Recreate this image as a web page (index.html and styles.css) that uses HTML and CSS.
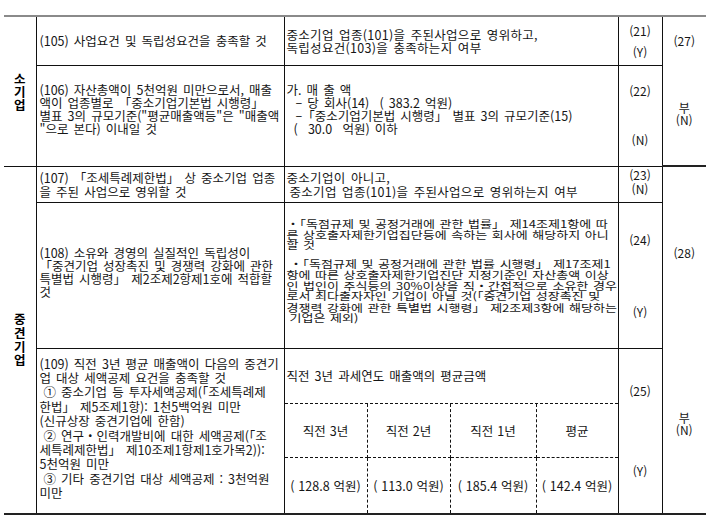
FILE: index.html
```html
<!DOCTYPE html>
<html lang="ko">
<head>
<meta charset="utf-8">
<title>중소기업·중견기업 요건 검토표</title>
<link rel="stylesheet" href="styles.css">
</head>
<body>
<table class="req">
  <colgroup>
    <col class="c-cat"><col class="c-cond"><col class="c-check"><col class="c-res"><col class="c-fin">
  </colgroup>
  <tr class="r1">
    <th rowspan="2" class="cat"><div class="vert">소<br>기<br>업</div></th>
    <td class="cond middle"><div class="txt">(105) 사업요건 및 독립성요건을 충족할 것</div></td>
    <td class="check middle"><div class="txt lh12 wide">중소기업 업종(101)을 주된사업으로 영위하고,<br>독립성요건(103)을 충족하는지 여부</div></td>
    <td class="res middle"><div class="pair g1"><span>(21)</span><span>(Y)</span></div></td>
    <td rowspan="2" class="fin"><div class="finbox f1"><span class="top">(27)</span><span class="bot">부<br>(N)</span></div></td>
  </tr>
  <tr class="r2">
    <td class="cond"><div class="txt lh13 pt18">(106) 자산총액이 5천억원 미만으로서, 매출<br>액이 업종별로 「중소기업기본법 시행령」<br>별표 3의 규모기준("평균매출액등"은 "매출액<br>"으로 본다) 이내일 것</div></td>
    <td class="check">
      <div class="txt lh13 pt18">
        <div>가. 매 출 액</div>
        <div class="ind1">– 당 회사(14) &nbsp;( 383.2 억원)</div>
        <div class="ind1">–「중소기업기본법 시행령」 별표 3의 규모기준(15)</div>
        <div class="ind2">( &nbsp;30.0 &nbsp;억원) 이하</div>
      </div>
    </td>
    <td class="res"><div class="pair g2"><span>(22)</span><span>(N)</span></div></td>
  </tr>
  <tr class="r3">
    <th rowspan="3" class="cat cat2"><div class="vert v2">중<br>견<br>기<br>업</div></th>
    <td class="cond"><div class="txt lh14 pt4">(107) 「조세특례제한법」 상 중소기업 업종<br>을 주된 사업으로 영위할 것</div></td>
    <td class="check">
      <div class="txt lh14 pt4 wide">
        <div>중소기업이 아니고,</div>
        <div class="ind3">중소기업 업종(101)을 주된사업으로 영위하는지 여부</div>
      </div>
    </td>
    <td class="res"><div class="pair g3"><span>(23)</span><span>(N)</span></div></td>
    <td rowspan="3" class="fin"><div class="finbox f2"><span class="top">(28)</span><span class="bot">부<br>(N)</span></div></td>
  </tr>
  <tr class="r4">
    <td class="cond"><div class="txt lh133 pt44">(108) 소유와 경영의 실질적인 독립성이<br>「중견기업 성장촉진 및 경쟁력 강화에 관한<br>특별법 시행령」 제2조제2항제1호에 적합할<br>것</div></td>
    <td class="check">
      <div class="txt dense">
        <p>・「독점규제 및 공정거래에 관한 법률」 제14조제1항에 따<br>른 상호출자제한기업집단등에 속하는 회사에 해당하지 아니<br>할 것</p>
        <p><span class="ind3">・「독점규제 및 공정거래에 관한 법률 시행령」 제17조제1</span><br>항에 따른 상호출자제한기업진단 지정기준인 자산총액 이상<br>인 법인이 주식등의 30%이상을 직・간접적으로 소유한 경우<br>로서 최다출자자인 기업이 아닐 것(「중견기업 성장촉진 및<br>경쟁력 강화에 관한 특별법 시행령」 제2조제3항에 해당하는<br><span class="ind3">기업은 제외)</span></p>
      </div>
    </td>
    <td class="res"><div class="pair g4"><span>(24)</span><span>(Y)</span></div></td>
  </tr>
  <tr class="r5">
    <td class="cond"><div class="txt lh144 pt9">(109) 직전 3년 평균 매출액이 다음의 중견기<br>업 대상 세액공제 요건을 충족할 것<br><span class="ind4">① 중소기업 등 투자세액공제(「조세특례제</span><br>한법」 제5조제1항): 1천5백억원 미만<br>(신규상장 중견기업에 한함)<br><span class="ind4">② 연구・인력개발비에 대한 세액공제(「조</span><br>세특례제한법」 제10조제1항제1호가목2)):<br>5천억원 미만<br><span class="ind4">③ 기타 중견기업 대상 세액공제 : 3천억원</span><br>미만</div></td>
    <td class="check nest">
      <div class="avg">
        <div class="avg-title">직전 3년 과세연도 매출액의 평균금액</div>
        <div class="avg-grid">
          <div class="avg-cell">직전 3년</div>
          <div class="avg-cell">직전 2년</div>
          <div class="avg-cell">직전 1년</div>
          <div class="avg-cell">평균</div>
          <div class="avg-cell">( 128.8 억원)</div>
          <div class="avg-cell">( 113.0 억원)</div>
          <div class="avg-cell">( 185.4 억원)</div>
          <div class="avg-cell">( 142.4 억원)</div>
        </div>
      </div>
    </td>
    <td class="res"><div class="pair g5"><span>(25)</span><span>(Y)</span></div></td>
  </tr>
</table>
</body>
</html>
```

FILE: styles.css
```css
html, body {
  margin: 0;
  padding: 0;
  background: #ffffff;
}

body {
  font-family: "Noto Sans CJK KR", "Liberation Sans", sans-serif;
  font-size: 12.5px;
  color: #161616;
}

.req {
  border-collapse: collapse;
  table-layout: fixed;
  width: 702px;
  margin: 15px 0 0 4px;
  word-spacing: 1.6px;
}

.c-cat { width: 32px; }
.c-cond { width: 248px; }
.c-check { width: 334px; }
.c-res { width: 44px; }
.c-fin { width: 44px; }

.req td,
.req th {
  border: 1px solid #111;
  padding: 0;
  vertical-align: top;
  white-space: nowrap;
  font-weight: normal;
  text-align: left;
  overflow: hidden;
}

.req tr.r1 > td,
.req tr.r1 > th {
  border-top: 2px solid #8a8a8a;
}

.req tr.r5 > td,
.req tr.r5 > th,
.req td.fin,
.req th.cat2 {
  border-bottom: 2px solid #222;
}

.req th.cat { border-left: none; }
.req td.fin { border-right: none; }

.r1 { height: 49px; }
.r2 { height: 101px; }
.r3 { height: 36px; }
.r4 { height: 146px; }
.r5 { height: 165px; }

.req td.middle { vertical-align: middle; }

/* category column */
.req th.cat {
  vertical-align: middle;
  text-align: center;
}
.vert {
  font-weight: bold;
  font-size: 12.5px;
  line-height: 13px;
  color: #000;
}
.vert.v2 { line-height: 13.7px; }

/* text blocks */
.txt { padding-left: 3px; }
.check .txt { padding-left: 2px; }
.wide { letter-spacing: 0.3px; }
.lh12 { line-height: 13px; }
.lh13 { line-height: 13px; }
.lh14 { line-height: 14px; }
.lh133 { line-height: 13.3px; }
.lh144 { line-height: 14.4px; }
.pt4 { padding-top: 4px; }
.pt9 { padding-top: 8px; }
.pt18 { padding-top: 17px; }
.pt44 { padding-top: 43px; }

.ind1 { padding-left: 9px; }
.ind2 { padding-left: 7px; }
.ind3 { padding-left: 3px; }
.ind4 { padding-left: 4px; }

/* dense, vertically compressed text */
.dense {
  height: 100px;
  margin-top: 15px;
  font-size: 13px;
  line-height: 13.5px;
  transform: scaleY(0.8);
  transform-origin: top left;
  word-spacing: 1px;
}
.dense p { margin: 0 0 10px 0; }

/* result column */
.pair {
  display: flex;
  flex-direction: column;
  align-items: center;
  line-height: 13px;
  font-size: 12px;
  word-spacing: 0;
}
.g1 { gap: 8px; }
.g2 { padding-top: 18px; gap: 36px; }
.g3 { padding-top: 1px; line-height: 14px; }
.g4 { padding-top: 30px; gap: 59px; }
.g5 { padding-top: 35px; gap: 67px; }

/* final column */
.finbox {
  display: flex;
  flex-direction: column;
  align-items: center;
  text-align: center;
  font-size: 12px;
}
.finbox .top { line-height: 13px; }
.finbox .bot { line-height: 12px; }
.f1 { padding-top: 17px; gap: 55px; }
.f2 { padding-top: 79px; gap: 153px; }

/* nested average table */
.req td.nest { padding: 0; }
.avg {
  display: flex;
  flex-direction: column;
  height: 164px;
}
.avg-title {
  height: 54px;
  display: flex;
  align-items: center;
  padding-left: 2px;
  border-bottom: 1px dashed #111;
}
.avg-grid {
  flex: 1;
  display: grid;
  grid-template-columns: 83px 83px 86px 1fr;
  grid-template-rows: 1fr 1fr;
}
.avg-cell {
  display: flex;
  align-items: center;
  justify-content: center;
  border-right: 1px dashed #111;
  word-spacing: 0.5px;
}
.avg-cell:nth-child(4n) { border-right: none; }
.avg-cell:nth-child(-n+4) { border-bottom: 1px dashed #111; }
```
